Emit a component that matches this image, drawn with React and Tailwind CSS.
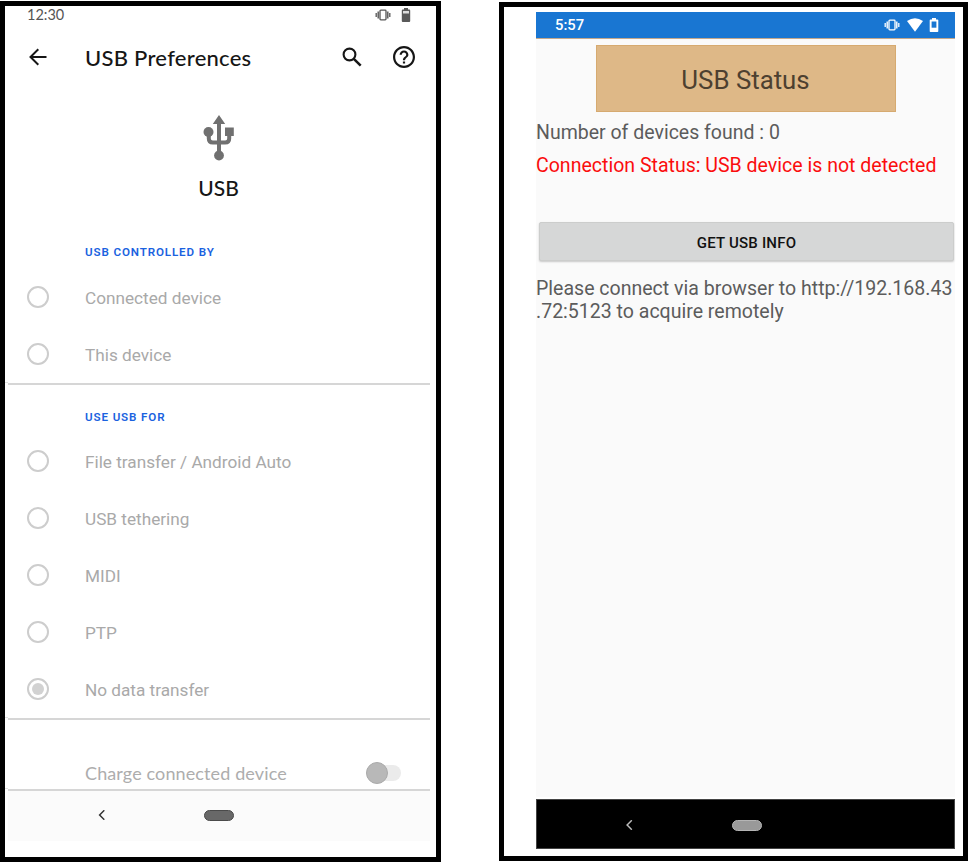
import React from 'react';

function VibrateIcon({ className }) {
  return (
    <svg className={className} viewBox="0 0 16 12" fill="none" stroke="currentColor">
      <rect x="5" y="1.2" width="6" height="9.6" rx="0.8" strokeWidth="1.3" />
      <path d="M3.2 2.500v7M12.8 2.500v7" strokeWidth="1.400" />
      <path d="M1.2 4.100v3.800M14.8 4.100v3.800" strokeWidth="1.3" />
    </svg>
  );
}

function Radio({ checked }) {
  return (
    <span className="flex size-[22px] items-center justify-center rounded-full border-2 border-[#cdcdcd]">
      {checked && <span className="size-[12px] rounded-full bg-[#d2d2d2]" />}
    </span>
  );
}

function Option({ label, checked }) {
  return (
    <div className="flex h-[57px] items-center pl-[22px]">
      <Radio checked={checked} />
      <span className="ml-[36px] pt-[5px] text-[17.2px] leading-none whitespace-nowrap text-[#a9a9a9]">{label}</span>
    </div>
  );
}

function SectionLabel({ children }) {
  return (
    <div className="flex h-[50px] items-center pt-[19px] pl-[80px] text-[11.6px] leading-none font-semibold tracking-[0.88px] text-[#1a62e0]">
      {children}
    </div>
  );
}

function Divider() {
  return (
    <div className="flex h-px items-start">
      <div className="-mt-px h-px w-[3px] shrink-0 bg-[#e2e2e2]" />
      <div className="mr-[6px] h-[1.5px] grow bg-[#d6d6d6]" />
    </div>
  );
}

function PreferencesScreen() {
  return (
    <div className="mt-px flex h-[861px] w-[441px] shrink-0 flex-col border-[5px] border-black bg-white font-['Roboto',sans-serif]">
      <div className="flex h-[19px] items-center justify-between pr-[25px] pl-[22px] text-[#555]">
        <span className="pb-px font-['Lato',sans-serif] text-[14.5px] leading-none">12:30</span>
        <div className="flex items-center gap-[10px] pb-px">
          <VibrateIcon className="h-[12px] w-[16px]" />
          <svg className="h-[14px] w-[10px]" viewBox="0 0 10 14">
            <path d="M3 0h4v1.5h1.3q.9 0 .9.9v10.700q0 .9-.9.9H1.700q-.9 0-.9-.9V2.400q0-.9.9-.9H3z" fill="#5a5a5a" />
            <path d="M2 3h6v2.500H2z" fill="#ddd" />
          </svg>
        </div>
      </div>
      <div className="flex h-[64px] items-center pr-[21px] pb-px pl-[24px] text-[#161616]">
        <svg className="size-[18px]" viewBox="0 0 18 18" fill="none" stroke="currentColor" strokeWidth="2">
          <path d="M17.500 9H2M9.300 1.200L1.500 9l7.800 7.800" />
        </svg>
        <h1 className="ml-[38px] pt-[2px] font-['Lato',sans-serif] text-[22px] leading-none font-medium tracking-[0.26px] whitespace-nowrap">USB Preferences</h1>
        <svg className="ml-auto size-[20px]" viewBox="0 0 20 20" fill="none" stroke="currentColor">
          <circle cx="7.500" cy="7.500" r="5.900" strokeWidth="2.100" />
          <path d="M11.800 11.800l6.900 6.900" strokeWidth="2.500" />
        </svg>
        <svg className="ml-[31px] size-[22px]" viewBox="2 2 20 20" fill="currentColor">
          <path d="M11 18h2v-2h-2v2zm1-16C6.480 2 2 6.480 2 12s4.480 10 10 10 10-4.480 10-10S17.520 2 12 2zm0 18c-4.410 0-8-3.590-8-8s3.590-8 8-8 8 3.590 8 8-3.590 8-8 8zm0-14c-2.210 0-4 1.790-4 4h2c0-1.100.9-2 2-2s2 .9 2 2c0 2-3 1.750-3 5h2c0-2.250 3-2.500 3-5 0-2.210-1.790-4-4-4z" />
        </svg>
      </div>
      <div className="flex h-[129px] flex-col items-center pt-[26px] pr-[4px]">
        <svg className="h-[46px] w-[32px]" viewBox="0 0 32 46">
          <path d="M16 7v32M5.800 17v6.500q0 4 4 4h12.400q4 0 4-4V17" fill="none" stroke="#707070" strokeWidth="4" />
          <path d="M16 0l6.200 9H9.800zM22 12.500h8.800v8.500H22z" fill="#707070" />
          <circle cx="5.500" cy="17" r="5" fill="#707070" />
          <circle cx="16" cy="40.500" r="4.900" fill="#707070" />
        </svg>
        <span className="mt-[16px] font-['Lato',sans-serif] text-[21px] leading-none font-medium text-[#161616]">USB</span>
      </div>
      <SectionLabel>USB CONTROLLED BY</SectionLabel>
      <Option label="Connected device" />
      <Option label="This device" />
      <div className="pt-px">
        <Divider />
      </div>
      <div className="-mt-px h-[49px]">
        <SectionLabel>USE USB FOR</SectionLabel>
      </div>
      <Option label="File transfer / Android Auto" />
      <Option label="USB tethering" />
      <Option label="MIDI" />
      <Option label="PTP" />
      <Option label="No data transfer" checked />
      <div className="pt-px">
        <Divider />
      </div>
      <div className="flex h-[70px] items-center justify-between pt-[38px] pr-[35px] pl-[80px]">
        <span className="font-['Lato',sans-serif] text-[18px] leading-none tracking-[0.12px] whitespace-nowrap text-[#adadad]">Charge connected device</span>
        <span className="flex h-[16px] w-[35px] items-center rounded-full bg-[#ebebeb]">
          <span className="size-[22px] shrink-0 rounded-full border border-[#aaa] bg-[#b8b8b8]" />
        </span>
      </div>
      <Divider />
      <div className="mt-px mr-[6px] ml-[3px] flex h-[50px] items-center bg-[#fbfbfb] pb-[2px] pl-[90px]">
        <svg className="size-[10px]" viewBox="0 0 10 10" fill="none" stroke="#333" strokeWidth="1.500">
          <path d="M6.300 .3L1.600 5l4.700 4.700" />
        </svg>
        <span className="ml-[96px] h-[11px] w-[30px] rounded-full border border-[#4a4a4a] bg-[#686868]" />
      </div>
    </div>
  );
}

function StatusScreen() {
  return (
    <div className="mt-[2px] ml-[58px] h-[859px] w-[469px] shrink-0 border-[5px] border-black bg-white pt-[5px] pl-[32px] font-['Roboto',sans-serif]">
      <div className="flex h-[785px] w-[419px] flex-col bg-[#fafafa]">
        <div className="flex h-[27px] items-center border-b border-[#c3a78b] bg-[#1976d2] pr-[16px] pb-px pl-[19px] text-white">
          <span className="pt-[2px] text-[14.800px] leading-none font-medium">5:57</span>
          <VibrateIcon className="ml-auto h-[12px] w-[16px]" />
          <svg className="ml-[7px] h-[14px] w-[16px]" viewBox="0 0 16 14" fill="currentColor">
            <path d="M0 3Q8-2.500 16 3L8 13.700z" />
          </svg>
          <svg className="ml-[6px] h-[14px] w-[10px]" viewBox="0 0 10 14">
            <path d="M3 0h4v1.400h1.500q.8 0 .8.8v11q0 .8-.8.8h-7q-.8 0-.8-.8v-11q0-.8.8-.8H3z" fill="#fff" />
            <path d="M2.600 3.500h4.800v6.200H2.600z" fill="#1976d2" />
          </svg>
        </div>
        <div className="mt-[6px] flex h-[67px] w-[300px] items-center justify-center self-center border border-[#d6aa70] bg-[#deb887] pt-[5px]">
          <h2 className="text-[25.800px] leading-none text-[#4d4030]">USB Status</h2>
        </div>
        <p className="mt-[10px] text-[19.5px] leading-[22px] whitespace-nowrap text-[#5c5c5c]">Number of devices found : 0</p>
        <p className="mt-[11px] text-[19.55px] leading-[22px] whitespace-nowrap text-[#fb0d0d]">Connection Status: USB device is not detected</p>
        <button className="mt-[45px] mr-[1px] ml-[3px] h-[39px] shrink-0 rounded-[2px] border border-[#cccdcc] bg-[#d6d7d7] pt-[3px] text-[15px] leading-none font-medium tracking-[0.2px] text-[#111] shadow-[0_1px_2px_rgba(0,0,0,0.2)]">
          GET USB INFO
        </button>
        <p className="mt-[16px] text-[19.55px] leading-[23px] whitespace-nowrap text-[#5c5c5c]">
          Please connect via browser to http://192.168.43
          <br />
          .72:5123 to acquire remotely
        </p>
      </div>
      <div className="mt-[2px] flex h-[50px] w-[419px] items-center border border-[#444] bg-black pt-[2px] pl-[88px]">
        <svg className="size-[10px]" viewBox="0 0 10 10" fill="none" stroke="#bbb" strokeWidth="1.500">
          <path d="M6.800 .3L2.100 5l4.700 4.700" />
        </svg>
        <span className="ml-[97px] h-[11px] w-[30px] rounded-full border border-[#b5b5b5] bg-[#999]" />
      </div>
    </div>
  );
}

export default function App() {
  return (
    <main className="flex h-[864px] w-[978px] items-start overflow-hidden bg-white">
      <PreferencesScreen />
      <StatusScreen />
    </main>
  );
}
